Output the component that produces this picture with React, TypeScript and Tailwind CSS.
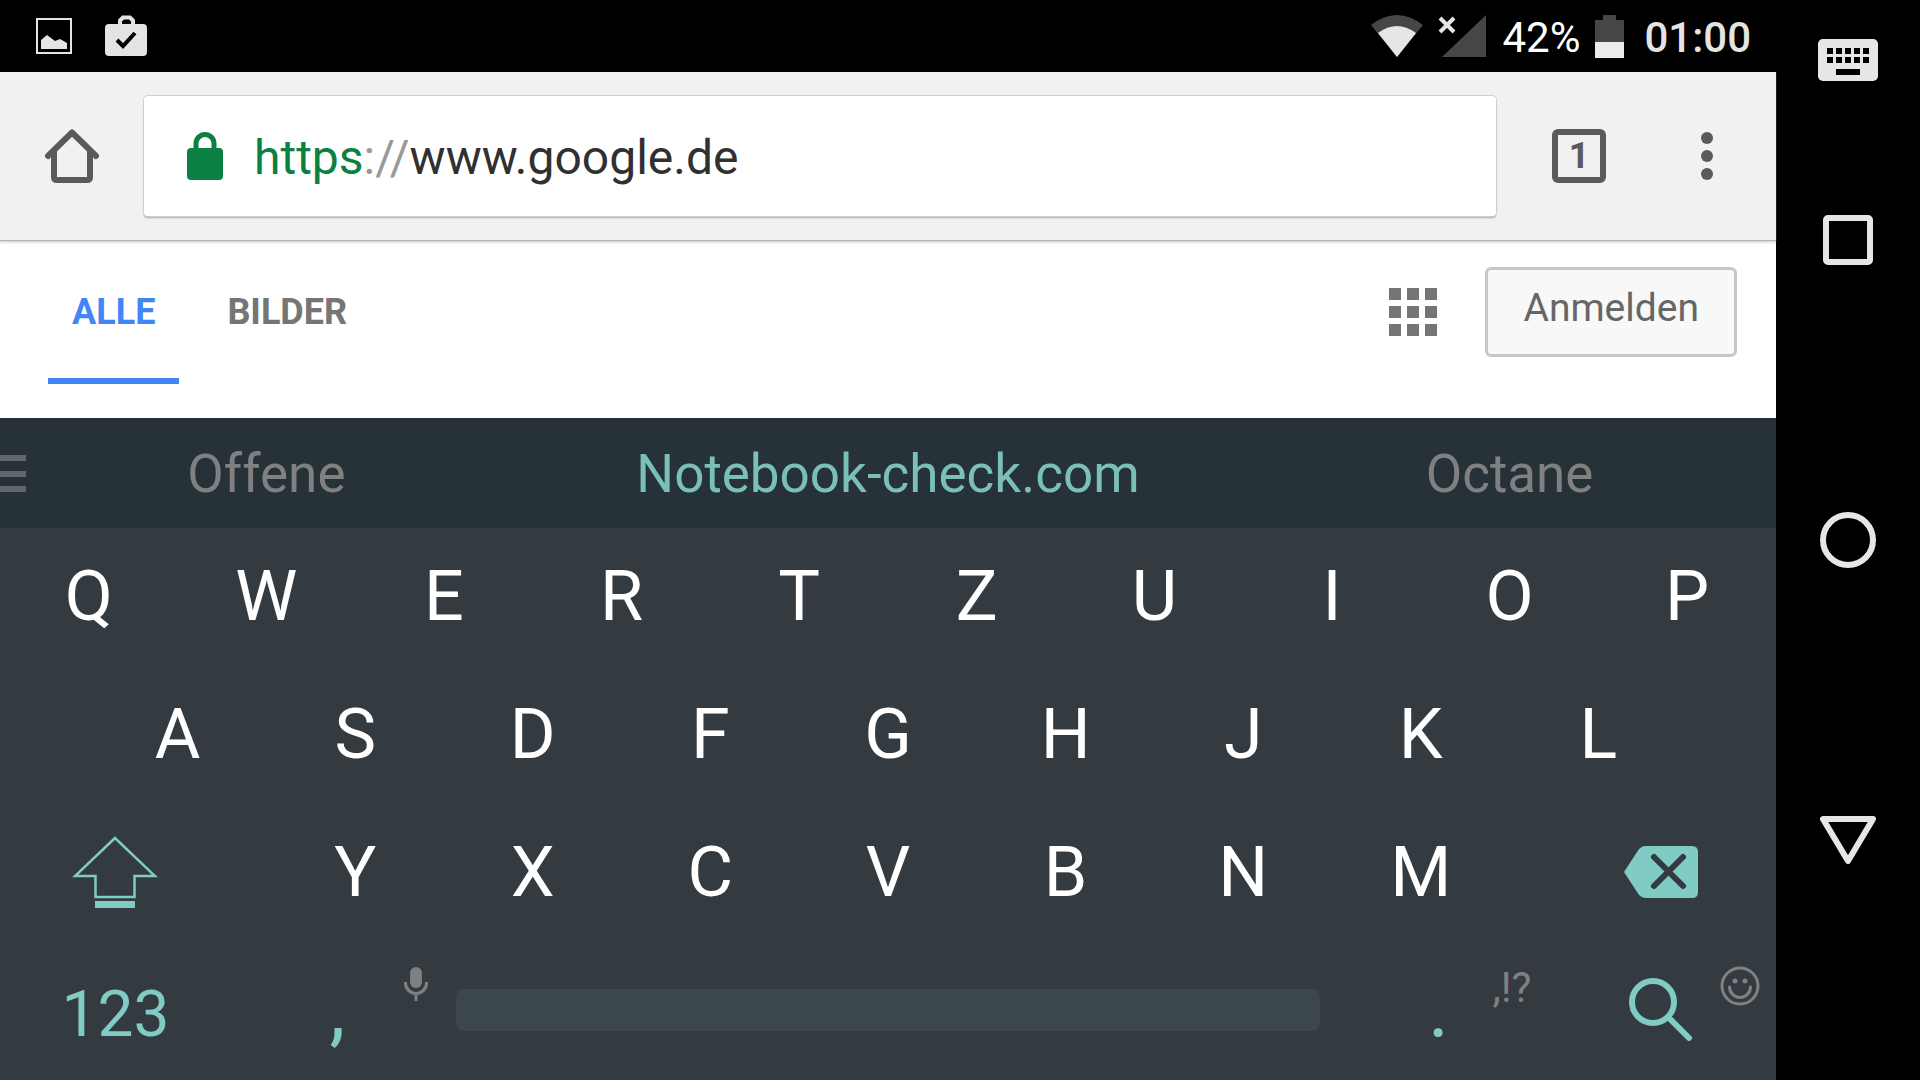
import type { ReactNode } from "react";

const KEY_ROWS = ["QWERTZUIOP", "ASDFGHJKL", "YXCVBNM"];

const Key = ({ children, label, className = "w-[10%]" }: { children: ReactNode; label?: string; className?: string }) => (
  <button aria-label={label} className={`relative flex h-full items-center justify-center pb-0.5 ${className}`}>
    {children}
  </button>
);

const StatusBar = () => (
  <div className="flex h-[72px] items-center justify-between bg-black pl-9 pr-[25px]">
    <div className="flex items-center gap-8">
      <svg width="36" height="36" viewBox="0 0 36 36">
        <rect x="1" y="1" width="34" height="34" fill="none" stroke="#e4e4e4" strokeWidth="2" />
        <path d="M5 22l6-5 8 6 5-2 7 4v6H5z" fill="#e4e4e4" />
      </svg>
      <svg width="44" height="42" viewBox="0 0 44 42">
        <path d="M16 9V5.500l3-3h7l3 3V9" fill="none" stroke="#e4e4e4" strokeWidth="4" />
        <rect x="1" y="9" width="42" height="32" rx="4" fill="#e4e4e4" />
        <path d="M13 25l6 6 12-13" fill="none" stroke="#000" strokeWidth="4" />
      </svg>
    </div>
    <div className="flex items-center text-[42px] leading-[48px]">
      <svg width="52" height="42" viewBox="0 0 52 42">
        <path d="M0 10Q26-10 52 10L26 42z" fill="#464646" />
        <path d="M7 18q19-14 38 0L26 42z" fill="#e6e6e6" />
      </svg>
      <svg className="ml-[15px]" width="48" height="42" viewBox="0 0 48 42">
        <path d="M48 0v42H4z" fill="#464646" />
        <path d="M2 3l14 14M16 3L2 17" stroke="#e6e6e6" strokeWidth="4" />
      </svg>
      <span className="ml-4 pt-1 text-white">42%</span>
      <svg className="ml-[15px]" width="29" height="43" viewBox="0 0 29 43">
        <path d="M8 0h13v5h8v22H0V5h8z" fill="#464646" />
        <path d="M0 27h29v16H0z" fill="#ececec" />
      </svg>
      <span className="ml-5 pt-1 font-medium text-[#e4e4e4]">01:00</span>
    </div>
  </div>
);

const Toolbar = () => (
  <div className="relative z-10 flex h-[168px] items-center bg-[#f1f1f1] shadow-[0_1px_1px_#b4b4b4,0_2px_3px_rgba(0,0,0,0.2)]">
    <button aria-label="Startseite" className="flex w-36 justify-center">
      <svg width="54" height="54" viewBox="0 0 54 54" fill="none" stroke="#5a5a5a" strokeWidth="6" strokeLinecap="round" strokeLinejoin="round">
        <path d="M3 27L27 3.500 51 27" />
        <path d="M9 22v26q0 3 3 3h30q3 0 3-3V22" />
      </svg>
    </button>
    <div className="flex h-[120px] flex-1 items-center rounded bg-white pl-[43px] text-5xl leading-[60px] shadow-[0_0_0_1px_#cfcfcf,0_2px_2px_rgba(0,0,0,0.3)]">
      <svg width="36" height="48" viewBox="0 0 36 48">
        <rect y="16" width="36" height="32" rx="4" fill="#0b8043" />
        <path d="M9 18v-6.500a9 9 0 0 1 18 0V18" fill="none" stroke="#0b8043" strokeWidth="5" />
      </svg>
      <label htmlFor="address" className="ml-[31px] pt-1 text-[#999]">
        <span className="text-[#0b8043]">https</span>://
      </label>
      <input id="address" defaultValue="www.google.de" className="min-w-0 flex-1 pt-1 text-[#303030] outline-none" />
    </div>
    <button aria-label="Tabs" className="ml-14 flex size-[54px] items-center justify-center rounded-md border-6 border-[#5a5a5a] text-4xl font-bold text-[#5a5a5a]">
      1
    </button>
    <button aria-label="Menü" className="ml-16 mr-8 flex w-[74px] justify-center">
      <svg width="12" height="48" viewBox="0 0 12 48" fill="#5a5a5a">
        <circle cx="6" cy="6" r="6" />
        <circle cx="6" cy="24" r="6" />
        <circle cx="6" cy="42" r="6" />
      </svg>
    </button>
  </div>
);

const PageHeader = () => (
  <div className="flex h-[178px] items-start justify-between bg-white pl-12 pr-[39px]">
    <nav className="flex gap-6 text-4xl font-bold leading-[48px]">
      <a href="#alle" className="h-36 border-b-6 border-[#4285f4] px-6 pt-12 text-[#4285f4]">
        ALLE
      </a>
      <a href="#bilder" className="h-36 px-6 pt-12 text-[#757575]">
        BILDER
      </a>
    </nav>
    <div className="flex items-center gap-12 pt-[27px]">
      <button aria-label="Google-Apps" className="grid grid-cols-3 gap-1.5">
        {Array.from({ length: 9 }, (_, i) => (
          <span key={i} className="size-3 bg-[#757575]" />
        ))}
      </button>
      <button className="h-[90px] rounded-md border-3 border-[#c6c6c6] bg-[#f8f8f8] px-[35px] pb-2 text-[39px] text-[#666]">
        Anmelden
      </button>
    </div>
  </div>
);

const Suggestions = () => (
  <div className="relative flex h-[110px] items-center bg-[#263238] pt-0.5 text-[53px] leading-[60px] text-[#808080]">
    <svg className="absolute left-0" width="26" height="38" viewBox="0 0 26 38" fill="#616668">
      <path d="M0 0h26v6H0zM0 16h26v6H0zM0 31h26v6H0z" />
    </svg>
    <button className="w-[30%]">Offene</button>
    <button className="flex-1 text-[#7abfb8]">Notebook-check.com</button>
    <button className="w-[30%]">Octane</button>
  </div>
);

const letterKeys = (letters: string) =>
  letters.split("").map((letter) => <Key key={letter}>{letter}</Key>);

const Keyboard = () => (
  <div className="grid flex-1 grid-rows-4 bg-[#333a40] text-[70px] leading-[80px] text-white">
    <div className="flex">{letterKeys(KEY_ROWS[0])}</div>
    <div className="flex justify-center">{letterKeys(KEY_ROWS[1])}</div>
    <div className="flex justify-between">
      <Key label="Umschalttaste" className="w-[13%]">
        <svg width="86" height="72" viewBox="0 0 86 72">
          <path d="M43 2L3 40h20.500v21h39V40H83z" fill="none" stroke="#80cbc4" strokeWidth="2.500" />
          <path d="M23 65h40v7H23z" fill="#80cbc4" />
        </svg>
      </Key>
      <div className="flex w-[70%] [&>button]:flex-1">{letterKeys(KEY_ROWS[2])}</div>
      <Key label="Löschen" className="w-[13%]">
        <svg width="76" height="54" viewBox="0 0 76 54">
          <path d="M1 27L16 4q3-3 6-3h47q6 0 6 6v40q0 6-6 6H22q-3 0-6-3z" fill="#80cbc4" />
          <path d="M31 12l29 29M60 12L31 41" stroke="#333a40" strokeWidth="6" strokeLinecap="round" />
        </svg>
      </Key>
    </div>
    <div className="flex justify-between text-[80px] text-[#80cbc4]">
      <Key className="w-[13%] pt-2.5 text-[64px]">123</Key>
      <Key>
        ,
        <svg className="absolute -right-0.5 top-6" width="24" height="36" viewBox="0 0 24 36">
          <rect x="6" y="1" width="12" height="21" rx="6" fill="#808080" />
          <path d="M1.500 16v1a10.500 10.500 0 0 0 21 0v-1M12 27v8" fill="none" stroke="#808080" strokeWidth="3" />
        </svg>
      </Key>
      <Key label="Leertaste" className="w-1/2">
        <span className="mx-3 h-[42px] flex-1 rounded-lg bg-[#3c474c]" />
      </Key>
      <Key>
        .
        <span className="absolute -right-1 top-[22px] text-[42px] leading-[48px] text-[#808080]">,!?</span>
      </Key>
      <Key label="Suchen" className="w-[13%]">
        <svg width="64" height="64" viewBox="0 0 64 64" fill="none" stroke="#80cbc4" strokeWidth="6">
          <circle cx="24" cy="24" r="21" />
          <path d="M39 39l21 21" strokeLinecap="round" />
        </svg>
        <svg className="absolute right-4 top-6" width="40" height="40" viewBox="0 0 40 40" fill="none" stroke="#808080" strokeWidth="3">
          <circle cx="20" cy="20" r="18" />
          <path d="M9.500 21a10.500 10.500 0 0 0 21 0" strokeLinecap="round" />
          <circle cx="15" cy="15" r="2.500" fill="#808080" stroke="none" />
          <circle cx="25" cy="15" r="2.500" fill="#808080" stroke="none" />
        </svg>
      </Key>
    </div>
  </div>
);

const NavBar = () => (
  <nav className="grid w-36 grid-rows-[1fr_2fr_3fr_2fr_1fr] justify-items-center bg-black">
    <button aria-label="Tastatur">
      <svg width="60" height="42" viewBox="0 0 60 42">
        <rect width="60" height="42" rx="5" fill="#e6e6e6" />
        <path
          d="M9 9h6v6H9zM18 9h6v6h-6zM27 9h6v6h-6zM36 9h6v6h-6zM45 9h6v6h-6zM9 18h6v6H9zM18 18h6v6h-6zM27 18h6v6h-6zM36 18h6v6h-6zM45 18h6v6h-6zM18 30h24v6H18z"
          fill="#000"
        />
      </svg>
    </button>
    <button aria-label="Übersicht">
      <svg width="50" height="50" viewBox="0 0 50 50">
        <rect x="3" y="3" width="44" height="44" rx="2" fill="none" stroke="#e6e6e6" strokeWidth="6" />
      </svg>
    </button>
    <button aria-label="Home">
      <svg width="56" height="56" viewBox="0 0 56 56">
        <circle cx="28" cy="28" r="25" fill="none" stroke="#e6e6e6" strokeWidth="6" />
      </svg>
    </button>
    <button aria-label="Zurück">
      <svg width="56" height="48" viewBox="0 0 56 48">
        <path d="M3 3h50L28 45z" fill="none" stroke="#e6e6e6" strokeWidth="6" strokeLinejoin="round" />
      </svg>
    </button>
  </nav>
);

const App = () => {
  return (
    <div className="flex min-h-screen bg-black font-[Roboto,sans-serif]">
      <main className="flex flex-1 flex-col">
        <StatusBar />
        <Toolbar />
        <PageHeader />
        <Suggestions />
        <Keyboard />
      </main>
      <NavBar />
    </div>
  );
};

export default App;
